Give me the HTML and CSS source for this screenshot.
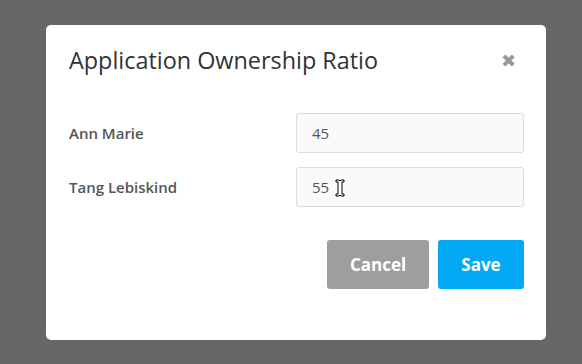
FILE: index.html
```html
<!DOCTYPE html>
<html lang="en">
<head>
    <meta charset="UTF-8">
    <title>Application Ownership Ratio</title>
    <link rel="stylesheet" href="styles.css">
</head>
<body>
    <div class="modal">
        <div class="modal-head">
            <h2 class="modal-title">Application Ownership Ratio</h2>
            <span class="close">&#x2716;</span>
        </div>
        <div class="modal-body">
            <div class="row">
                <label class="label">Ann Marie</label>
                <div class="field">45</div>
            </div>
            <div class="row">
                <label class="label">Tang Lebiskind</label>
                <div class="field">55
                    <svg class="ibeam" width="10" height="18" viewBox="0 0 10 18">
                        <path d="M1 1h3l1 1 1-1h3v2H7v12h2v2H6l-1-1-1 1H1v-2h2V3H1z" fill="#fff" stroke="#000" stroke-width="1"/>
                    </svg>
                </div>
            </div>
        </div>
        <div class="modal-foot">
            <button class="btn btn-cancel">Cancel</button>
            <button class="btn btn-save">Save</button>
        </div>
    </div>
</body>
</html>
```
FILE: styles.css
```css
*{
    margin: 0;
    padding: 0;
    box-sizing: border-box;
}
body{
    background-color: #666666;
    font-family: "Open Sans", sans-serif;
    width: 582px;
    height: 364px;
    overflow: hidden;
}
.modal{
    width: 500px;
    height: 315px;
    margin: 25px 0 0 46px;
    background-color: #fff;
    border-radius: 5px;
}
.modal-head{
    display: flex;
    justify-content: space-between;
    align-items: center;
    padding: 19px 30px 0 23px;
}
.modal-title{
    font-size: 23.4px;
    line-height: 32px;
    font-weight: normal;
    color: #333;
}
.close{
    font-size: 18px;
    color: #999;
    line-height: 32px;
}
.modal-body{
    padding: 37px 22px 0 23px;
    display: flex;
    flex-direction: column;
    gap: 14px;
}
.row{
    display: grid;
    grid-template-columns: 1fr 228px;
    align-items: center;
}
.label{
    font-size: 15px;
    font-weight: 600;
    color: #555;
}
.field{
    position: relative;
    height: 40px;
    line-height: 38px;
    padding: 0 15px;
    border: 1px solid #ddd;
    border-radius: 3px;
    background-color: #fafafa;
    font-size: 15px;
    color: #555;
}
.ibeam{
    position: absolute;
    left: 38px;
    top: 11px;
}
.modal-foot{
    display: flex;
    justify-content: flex-end;
    gap: 9px;
    padding: 33px 22px 0 0;
}
.btn{
    height: 49px;
    border: none;
    border-radius: 3px;
    color: #fff;
    font-family: "Open Sans", sans-serif;
    font-size: 17px;
    font-weight: bold;
}
.btn-cancel{
    width: 102px;
    background-color: #9e9e9e;
}
.btn-save{
    width: 86px;
    background-color: #03a9f4;
}
```
